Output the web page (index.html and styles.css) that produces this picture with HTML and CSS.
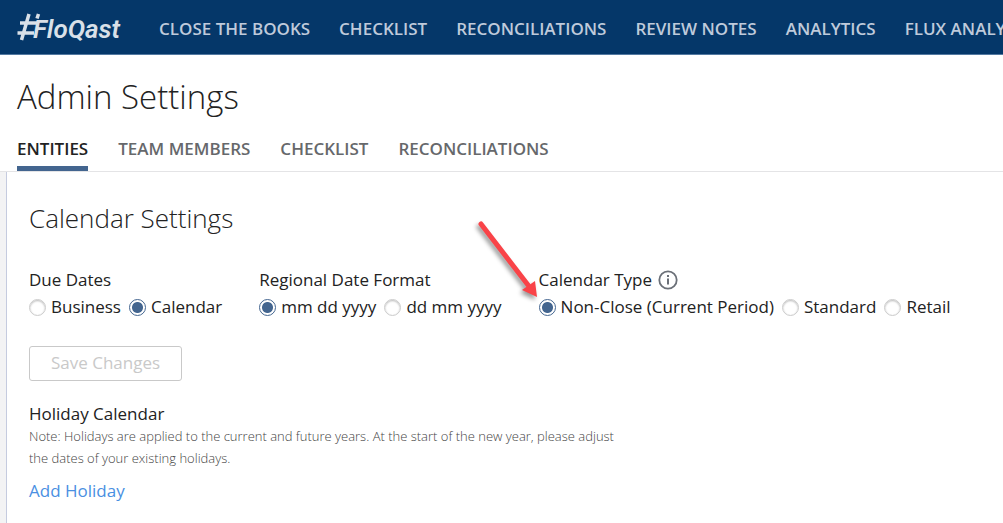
FILE: index.html
```html
<!DOCTYPE html>
<html lang="en">
<head>
    <meta charset="UTF-8">
    <meta name="viewport" content="width=device-width, initial-scale=1">
    <title>Admin Settings</title>
    <link rel="stylesheet" href="styles.css">
</head>
<body>

<!-- Top bar -->
<header class="topbar">
    <a href="#" class="logo">
        <svg class="logo-hash" width="24" height="28" viewBox="0 0 24 28" aria-hidden="true">
            <path d="M12 1L4.500 27M21.500 1L20 5.500M3 10H20M0.500 20H17" fill="none" stroke="currentColor" stroke-width="3.500"/>
        </svg>
        <span class="logo-text">FloQast</span>
    </a>
    <nav class="main-nav">
        <a href="#">CLOSE THE BOOKS</a>
        <a href="#">CHECKLIST</a>
        <a href="#">RECONCILIATIONS</a>
        <a href="#">REVIEW NOTES</a>
        <a href="#">ANALYTICS</a>
        <a href="#">FLUX ANALYSIS</a>
    </nav>
</header>

<!-- Page title and tabs -->
<div class="page-head">
    <h1>Admin Settings</h1>
    <nav class="tabs">
        <a href="#" class="tab active">ENTITIES</a>
        <a href="#" class="tab">TEAM MEMBERS</a>
        <a href="#" class="tab">CHECKLIST</a>
        <a href="#" class="tab">RECONCILIATIONS</a>
    </nav>
</div>

<main class="content">
    <section class="panel">
        <h2>Calendar Settings</h2>

        <form class="settings">
            <div class="groups">
                <fieldset class="group">
                    <legend>Due Dates</legend>
                    <div class="options">
                        <label><input type="radio" name="due">Business</label>
                        <label><input type="radio" name="due" checked>Calendar</label>
                    </div>
                </fieldset>

                <fieldset class="group">
                    <legend>Regional Date Format</legend>
                    <div class="options">
                        <label><input type="radio" name="format" checked>mm dd yyyy</label>
                        <label><input type="radio" name="format">dd mm yyyy</label>
                    </div>
                </fieldset>

                <fieldset class="group">
                    <legend>Calendar Type
                        <svg class="info" width="20" height="20" viewBox="0 0 20 20" aria-hidden="true">
                            <circle cx="10" cy="10" r="8.700" fill="none" stroke="#6b7078" stroke-width="1.800"/>
                            <path d="M10 8.500V14.500M10 5V7" stroke="#6b7078" stroke-width="2"/>
                        </svg>
                    </legend>
                    <div class="options">
                        <label><input type="radio" name="type" checked>Non-Close (Current Period)</label>
                        <label><input type="radio" name="type">Standard</label>
                        <label><input type="radio" name="type">Retail</label>
                    </div>
                    <svg class="arrow" width="76" height="90" viewBox="0 0 76 90" aria-hidden="true">
                        <path d="M12 12L59 73" stroke="#f94348" stroke-width="5" stroke-linecap="round"/>
                        <path d="M68 85L53 78L66 69Z" fill="#f94348"/>
                    </svg>
                </fieldset>
            </div>

            <button type="button" class="save" disabled>Save Changes</button>
        </form>

        <h3>Holiday Calendar</h3>
        <p class="note">Note: Holidays are applied to the current and future years. At the start of the new year, please adjust the dates of your existing holidays.</p>
        <a href="#" class="add">Add Holiday</a>
    </section>
</main>

</body>
</html>
```

FILE: styles.css
```css
* {
    box-sizing: border-box;
}

body {
    margin: 0;
    font-family: "Open Sans", sans-serif;
    font-size: 17px;
    line-height: 24px;
    color: #222;
    background-color: #fff;
    min-height: 100vh;
    display: flex;
    flex-direction: column;
}

a {
    text-decoration: none;
}

.topbar {
    display: flex;
    align-items: center;
    height: 55px;
    padding: 3px 0 0 17px;
    background-color: #053769;
    border-bottom: 1px solid #5379a1;
    overflow: hidden;
}

.logo {
    display: flex;
    align-items: center;
    flex: none;
    width: 142px;
    color: #d9e0e8;
}

.logo-hash {
    margin-bottom: 4px;
}

.logo-text {
    margin-left: -8px;
    font-family: Roboto, sans-serif;
    font-size: 26px;
    font-style: italic;
    font-weight: 600;
}

.main-nav {
    display: flex;
    gap: 29px;
    white-space: nowrap;
}

.main-nav a {
    color: #bfcadb;
    font-weight: 600;
}

.page-head {
    padding: 20px 17px 0;
    border-bottom: 1px solid #e4e4e6;
}

h1 {
    margin: 0;
    font-size: 33px;
    line-height: 44px;
    font-weight: 300;
}

.tabs {
    display: flex;
    gap: 30px;
    margin-top: 18px;
}

.tab {
    padding-bottom: 5px;
    border-bottom: 5px solid transparent;
    color: #66686b;
    font-weight: 600;
}

.tab.active {
    color: #222;
    border-bottom-color: #43658f;
}

.content {
    flex: 1;
    padding-left: 6px;
    background-color: #f3f3f4;
    display: flex;
}

.panel {
    flex: 1;
    padding: 28px 22px 16px;
    border-left: 1px solid #c5cbdf;
    background-color: #fff;
}

h2 {
    margin: 0;
    font-size: 26px;
    line-height: 36px;
    font-weight: 300;
}

.groups {
    display: flex;
    gap: 37px;
    margin-top: 32px;
    white-space: nowrap;
}

.group {
    position: relative;
    margin: 0;
    padding: 0;
    border: 0;
}

.group legend {
    display: flex;
    align-items: center;
    gap: 6px;
    padding: 0;
    height: 24px;
}

.options {
    display: flex;
    gap: 8px;
    margin-top: 3px;
}

.options label {
    display: flex;
    align-items: center;
    gap: 5px;
}

input[type="radio"] {
    appearance: none;
    width: 17px;
    height: 17px;
    margin: 0;
    border: 1px solid #ccc;
    border-radius: 50%;
    background-color: #fff;
    box-shadow: inset 0 1px 2px #bbb;
}

input[type="radio"]:checked {
    border-color: #43658f;
    background: radial-gradient(circle, #43658f 5px, #fff 6px);
    box-shadow: none;
}

/* pointer laid over the calendar type group */
.arrow {
    position: absolute;
    right: 100%;
    bottom: 17px;
    margin-right: -6px;
    filter: drop-shadow(-2px 3px 2px rgba(0, 0, 0, 0.4));
}

.save {
    display: block;
    margin-top: 27px;
    padding: 4px 21px 5px;
    border: 1px solid #c9c9c9;
    border-radius: 3px;
    background-color: #fff;
    color: #c9c9c9;
    font: inherit;
}

h3 {
    margin: 21px 0 0;
    font-size: 17px;
    line-height: 23px;
    font-weight: 400;
}

.note {
    max-width: 600px;
    margin: 0;
    font-size: 13px;
    line-height: 22px;
    font-weight: 300;
    color: #444;
}

.add {
    display: inline-block;
    margin-top: 10px;
    color: #4a90e2;
}
```
